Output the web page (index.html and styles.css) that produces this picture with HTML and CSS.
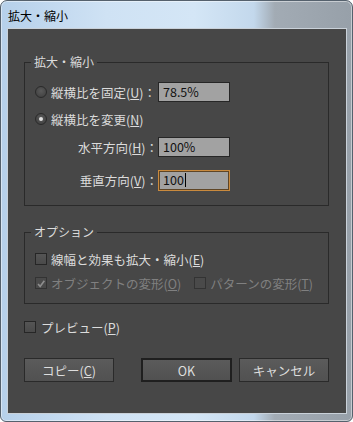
FILE: index.html
```html
<!DOCTYPE html>
<html>
<head>
	<meta charset="utf-8">
	<title>拡大・縮小</title>
	<link rel="stylesheet" href="styles.css">
</head>
<body>
	<div class="window">
		<div class="titlebar">拡大・縮小</div>
		<div class="client">
			<fieldset class="group scale">
				<legend>拡大・縮小</legend>
				<div class="row">
					<span class="lbl"><span class="radio"></span>縦横比を固定(<u>U</u>)：</span>
					<span class="field">78.5%</span>
				</div>
				<div class="row row2">
					<span class="lbl"><span class="radio on"></span>縦横比を変更(<u>N</u>)</span>
				</div>
				<div class="row row3">
					<span class="lbl right">水平方向(<u>H</u>)：</span>
					<span class="field">100%</span>
				</div>
				<div class="row row4">
					<span class="lbl right">垂直方向(<u>V</u>)：</span>
					<span class="field focus">100<span class="caret"></span></span>
				</div>
			</fieldset>

			<fieldset class="group options">
				<legend>オプション</legend>
				<div class="crow">
					<span class="check"></span>線幅と効果も拡大・縮小(<u>E</u>)
				</div>
				<div class="crow crow2 off">
					<span class="check on">
						<svg width="12" height="12" viewBox="0 0 12 12"><polyline points="2.5,6 5,9 10,2" fill="none" stroke="#8e8e8e" stroke-width="2"/></svg>
					</span>オブジェクトの変形(<u>O</u>)
					<span class="check second"></span>パターンの変形(<u>T</u>)
				</div>
			</fieldset>

			<div class="crow preview">
				<span class="check"></span>プレビュー(<u>P</u>)
			</div>

			<div class="buttons">
				<button class="btn">コピー(<u>C</u>)</button>
				<button class="btn ok">OK</button>
				<button class="btn">キャンセル</button>
			</div>
		</div>
	</div>
</body>
</html>
```

FILE: styles.css
```css
body{
  margin:0;
  background:#fff;
  font-family:"Noto Sans CJK JP", "Noto Sans", sans-serif;
}
.window{
  width:353px;
  height:422px;
  box-sizing:border-box;
  border:1px solid #55616d;
  border-radius:7px 7px 6px 6px;
  background:linear-gradient(to right, #b6d0ea 0%, #cfe2f4 30%, #d4e6f6 55%, #c3d8ec 72%, #a2abb4 78%, #97a0a9 100%);
  box-shadow:inset 0 0 0 1px rgba(255,255,255,0.45);
  display:flex;
  flex-direction:column;
}
.titlebar{
  height:28px;
  padding-left:7px;
  font-size:12px;
  line-height:29px;
  color:#000;
}
.client{
  flex:1;
  margin:0 6px 8px 7px;
  padding:25px 17px 0 16px;
  background:#474747;
  box-shadow:0 0 0 1px #c9d1d9;
  color:#dcdcdc;
  font-size:12.5px;
}
.group{
  margin:0;
  padding:12px 0 15px 0;
  border:1px solid #2a2a2a;
  min-width:0;
}
.group legend{
  margin-left:6px;
  padding:0 3px;
  font-size:12px;
  line-height:16px;
  color:#dcdcdc;
}
.options{
  margin-top:18px;
  padding:10px 0 11px 0;
}
.row{
  display:flex;
  align-items:center;
  height:20px;
  padding-left:10px;
}
.row2{ margin-top:7px; }
.row3{ margin-top:8px; }
.row4{ margin-top:13px; }
.lbl{
  display:flex;
  align-items:center;
  width:123px;
  white-space:nowrap;
}
.lbl.right{
  justify-content:flex-end;
}
.radio{
  width:12px;
  height:12px;
  box-sizing:border-box;
  border:1px solid #2a2a2a;
  border-radius:50%;
  background:radial-gradient(circle at 50% 40%, #5a5a5a, #3c3c3c);
  margin-right:4px;
  display:flex;
  align-items:center;
  justify-content:center;
}
.radio.on::after{
  content:"";
  width:4px;
  height:4px;
  border-radius:50%;
  background:#e0e0e0;
}
.field{
  width:72px;
  height:20px;
  box-sizing:border-box;
  border:1px solid #262626;
  background:#a2a2a2;
  color:#111;
  padding-left:4px;
  line-height:18px;
  font-size:12.5px;
  display:flex;
  align-items:center;
}
.field.focus{
  border-color:#c98a3e;
  box-shadow:inset 0 0 0 1px #5e4526;
  height:21px;
}
.caret{
  display:inline-block;
  width:1px;
  height:14px;
  background:#000;
  margin-left:1px;
}
.crow{
  display:flex;
  align-items:center;
  height:18px;
  padding-left:10px;
  white-space:nowrap;
}
.crow2{ margin-top:6px; }
.crow.off{ color:#808080; }
.check{
  width:12px;
  height:12px;
  box-sizing:border-box;
  border:1px solid #262626;
  background:linear-gradient(#555, #4a4a4a);
  margin-right:4px;
  display:flex;
}
.off .check{
  border-color:#333;
  background:#4a4a4a;
}
.check.second{
  margin-left:13px;
}
.preview{
  margin-top:14px;
  padding-left:0;
}
.preview .check{
  margin-right:5px;
}
.buttons{
  display:flex;
  gap:7px;
  margin-top:22px;
}
.btn{
  width:90px;
  height:24px;
  box-sizing:border-box;
  border:1px solid #2a2a2a;
  background:linear-gradient(#5b5b5b, #515151);
  color:#dedede;
  font-family:"Noto Sans CJK JP", "Noto Sans", sans-serif;
  font-size:12.5px;
  padding:0;
}
.btn.ok{
  width:91px;
  margin-left:auto;
  border:2px solid #1f1f1f;
}
```
